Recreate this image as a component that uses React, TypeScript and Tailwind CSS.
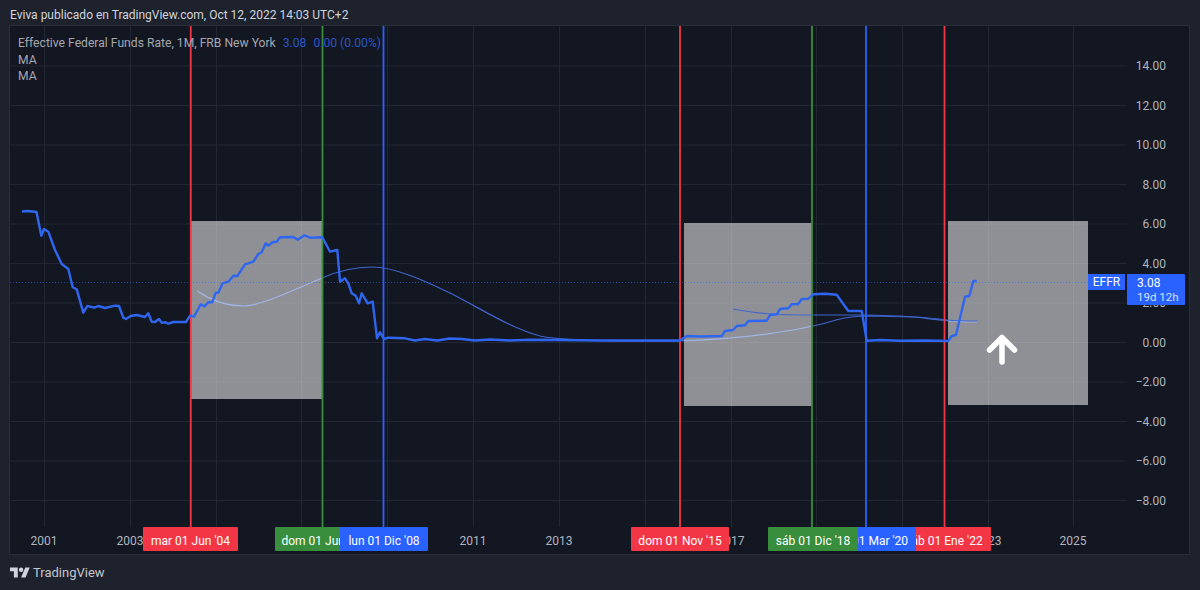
import React from "react";

const PRICES = ["14.00", "12.00", "10.00", "8.00", "6.00", "4.00", "2.00", "0.00", "−2.00", "−4.00", "−6.00", "−8.00"];
const priceY = (i: number) => 66 + i * 39.5;

const GRID_X = [44, 130, 216, 301, 387, 473, 559, 645, 731, 816, 902, 988, 1073];

// the other years sit behind the date tags in the screenshot
const YEARS = [
  { x: 44, label: "2001" },
  { x: 130, label: "2003" },
  { x: 473, label: "2011" },
  { x: 559, label: "2013" },
  { x: 731, label: "2017" },
  { x: 988, label: "2023" },
  { x: 1073, label: "2025" },
];

const EFFR =
  "22,211.5 28,211 36.5,212 41.3,235.7 44,229 48.3,231.7 55,250 61.7,264 68.3,269 72.7,287.3 76.7,289.3 83.3,312.7 87.3,306 94.3,307.7 98.3,306 105,308 115,305.7 119,306 123.3,317.7 126,319 130.7,316 136.7,315 145,317 148.3,313.3 151.7,321.7 155,322 159,319 161.7,322.7 165.7,322.3 168.3,323.7 173.3,322 186,322 190,315.7 194,316.7 200.7,304.3 204.3,306.3 208.3,302.3 212.3,302.3 215.7,292.7 218.3,292.7 222.7,283.3 228.3,281.7 233.3,275.7 237.3,276 245,264.3 253.3,261.7 258.3,254 261.7,252.3 265.7,243.3 268.3,245.7 272.3,242.3 276.7,241.7 280,237.3 293.3,237 297.7,239.7 304.3,235.3 310,237.7 322.3,237.3 330,251.7 337.3,250 340,281.7 345,278.3 348.3,283.3 351.7,293.3 355.7,295.7 359,303.3 361.7,293.3 367.7,303.3 372.7,301.7 377,338.3 380,332.3 384,339 388.3,337.7 405,338.3 415,340.5 425,339 437,340.5 450,338.5 462,339 475,340.5 490,339.5 510,340.5 530,339.8 560,340 600,340.5 640,340.5 680,340.5 686.7,336 700,336.5 721.7,336 725,331 733,330 736.7,326 745,325.3 748.3,321 766.7,320.7 770,315 776.7,314.3 780,309 788.3,308.3 791.7,304.3 798.3,304 801.7,299 808.3,298.7 813.3,294.3 825,293.7 836.7,294.7 848.3,311 861.7,311 866.7,340.7 880,340 900,340.7 925,340.5 948.3,341 951.7,336 956,335 965,296.7 969.3,296 973.3,281 976.7,281";

const MA_LONG =
  "M197.3 291C215 303 232 306 243 306C262 306 300 287 322 278C340 270 355 267 372 267C395 267 425 281 450 293C480 308 510 328 540 336C570 342 640 341 690 340.5C740 339 800 331 836 320C850 316 860 316 870 316L913 317C930 318.5 947 322 977 322";

const MA_SHORT = "M733 309C755 313 770 315 813 315L863 315C895 315.5 925 317 947 320C958 321 968 321 977 321";

const BOXES = [
  { x: 191, y: 221, w: 132, h: 178 },
  { x: 684, y: 223, w: 128, h: 183 },
  { x: 948, y: 221, w: 140, h: 184 },
];

const MARKERS = [
  { x: 190.75, color: "#f23645" },
  { x: 322.5, color: "#388e3c" },
  { x: 383.5, color: "#2962ff" },
  { x: 680, color: "#f23645" },
  { x: 812, color: "#388e3c" },
  { x: 866, color: "#2962ff" },
  { x: 944.5, color: "#f23645" },
];

// draw order matters here, the tags cover each other
const TAGS = [
  { left: 143, width: 95, text: "mar 01 Jun '04", bg: "bg-[#f23645]" },
  { left: 275, width: 95, text: "dom 01 Jun '06", bg: "bg-[#388e3c]" },
  { left: 340, width: 88, text: "lun 01 Dic '08", bg: "bg-[#2962ff]" },
  { left: 631, width: 98, text: "dom 01 Nov '15", bg: "bg-[#f23645]" },
  { left: 897, width: 94, text: "sáb 01 Ene '22", bg: "bg-[#f23645]" },
  { left: 817, width: 99, text: "dom 01 Mar '20", bg: "bg-[#2962ff]" },
  { left: 768, width: 90, text: "sáb 01 Dic '18", bg: "bg-[#388e3c]" },
];

function TvLogo() {
  return (
    <svg width="20" height="16" viewBox="0 0 36 28" fill="#d1d4dc">
      <path d="M14 22H7V11H0V4h14v18zM28 22h-8l7.5-18h8L28 22z" />
      <circle cx="20" cy="8" r="4" />
    </svg>
  );
}

function ChartDrawing() {
  return (
    <svg className="absolute left-0 top-0" width="1179" height="528" viewBox="10 26 1179 528" fill="none">
      {GRID_X.map((x) => (
        <line key={x} x1={x + 0.5} x2={x + 0.5} y1="26" y2="527" stroke="#232733" />
      ))}
      {PRICES.map((p, i) => (
        <line key={p} x1="10" x2="1127" y1={priceY(i)} y2={priceY(i)} stroke="#232733" />
      ))}
      <path d={MA_LONG} stroke="#3f66cf" strokeWidth="1.2" />
      {BOXES.map((b) => (
        <rect key={b.x} x={b.x} y={b.y} width={b.w} height={b.h} fill="#ffffff" fillOpacity="0.52" />
      ))}
      <path d={MA_SHORT} stroke="#3f66cf" strokeWidth="1.2" />
      <line x1="10" x2="1088" y1="282.5" y2="282.5" stroke="#2962ff" strokeOpacity="0.55" strokeDasharray="1 2" />
      {MARKERS.map((m) => (
        <line key={m.x} x1={m.x} x2={m.x} y1="26" y2="527" stroke={m.color} strokeWidth="1.8" />
      ))}
      <polyline points={EFFR} stroke="#2f66f0" strokeWidth="2.4" strokeLinejoin="round" />
      <path d="M1002 362V338M989.5 350L1002 337.5L1014.5 350" stroke="#ffffff" strokeWidth="5.5" strokeLinecap="round" strokeLinejoin="round" />
    </svg>
  );
}

export default function App() {
  return (
    <div className="flex h-[590px] w-[1200px] flex-col overflow-hidden bg-[#1e222d] font-['Roboto',sans-serif] text-[#d1d4dc]">
      <div className="flex h-[26px] items-center pl-[10px] pt-[4px] text-[12px] leading-none">
        Eviva publicado en TradingView.com, Oct 12, 2022 14:03 UTC+2
      </div>

      <div className="relative mx-[10px] h-[528px] w-[1179px] bg-[#131722] outline-1 outline-[#2a2e39]">
        <ChartDrawing />

        <div className="absolute left-[8px] top-[9px] flex flex-col text-[12.15px] leading-[16.5px] text-[#a4a7b0]">
          <div className="flex gap-[7px] whitespace-nowrap">
            <span>Effective Federal Funds Rate, 1M, FRB New York</span>
            <span className="text-[#2a55c8]">3.08</span>
            <span className="text-[#2a55c8]">0.00 (0.00%)</span>
          </div>
          <span>MA</span>
          <span>MA</span>
        </div>

        {PRICES.map((p, i) => (
          <span
            key={p}
            className="absolute right-[23px] -translate-y-1/2 text-[12px] leading-none text-[#b2b5be]"
            style={{ top: priceY(i) - 26 }}
          >
            {p}
          </span>
        ))}

        {YEARS.map((y) => (
          <span
            key={y.label}
            className="absolute top-[515px] -translate-x-1/2 -translate-y-1/2 text-[12px] leading-none text-[#b2b5be]"
            style={{ left: y.x - 10 }}
          >
            {y.label}
          </span>
        ))}

        {TAGS.map((t) => (
          <div
            key={t.text}
            className={`absolute top-[501px] flex h-[24px] items-center justify-center overflow-hidden whitespace-nowrap rounded-[1px] pt-[3px] text-[12px] leading-none text-white ${t.bg}`}
            style={{ left: t.left - 10, width: t.width }}
          >
            {t.text}
          </div>
        ))}

        <div className="absolute left-[1078px] top-[248px] flex h-[16px] w-[37px] items-center justify-center bg-[#2962ff] text-[12px] leading-none text-white">
          EFFR
        </div>
        <div className="absolute left-[1117px] top-[248px] flex h-[31px] w-[58px] flex-col justify-center whitespace-nowrap rounded-[1px] bg-[#2962ff] pl-[10px] text-[12px] leading-[14px] text-white">
          <span>3.08</span>
          <span className="text-[11.5px] text-[#d6e0ff]">19d 12h</span>
        </div>
      </div>

      <div className="flex flex-1 items-center gap-[3px] pl-[10px] pt-[2px] text-[13px] text-[#c3c6ce]">
        <TvLogo />
        <span>TradingView</span>
      </div>
    </div>
  );
}
